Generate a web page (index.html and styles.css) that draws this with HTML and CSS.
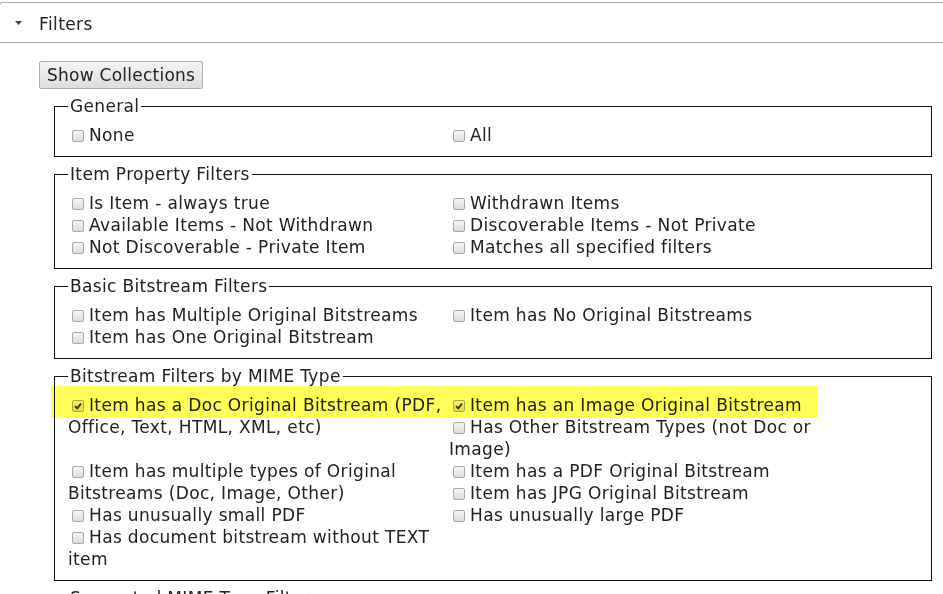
FILE: index.html
```html
<!DOCTYPE html>
<html>
<head>
<meta charset="utf-8">
<link rel="stylesheet" href="styles.css">
</head>
<body>
<div class="hdr">
  <svg class="tri" width="7" height="4" viewBox="0 0 7 4"><path d="M0 0H7L3.5 4Z" fill="#444"/></svg>
  <span class="hdr-title">Filters</span>
</div>
<div class="content">
  <button class="btn">Show Collections</button>

  <fieldset class="fs">
    <legend>General</legend>
    <div class="item"><span class="cb"></span>None</div>
    <div class="item"><span class="cb"></span>All</div>
  </fieldset>

  <fieldset class="fs">
    <legend>Item Property Filters</legend>
    <div class="item"><span class="cb"></span>Is Item - always true</div>
    <div class="item"><span class="cb"></span>Withdrawn Items</div>
    <div class="item"><span class="cb"></span>Available Items - Not Withdrawn</div>
    <div class="item"><span class="cb"></span>Discoverable Items - Not Private</div>
    <div class="item"><span class="cb"></span>Not Discoverable - Private Item</div>
    <div class="item"><span class="cb"></span>Matches all specified filters</div>
  </fieldset>

  <fieldset class="fs">
    <legend>Basic Bitstream Filters</legend>
    <div class="item"><span class="cb"></span>Item has Multiple Original Bitstreams</div>
    <div class="item"><span class="cb"></span>Item has No Original Bitstreams</div>
    <div class="item"><span class="cb"></span>Item has One Original Bitstream</div>
  </fieldset>

  <fieldset class="fs">
    <legend>Bitstream Filters by MIME Type</legend>
    <div class="item"><span class="cb on"><svg width="10" height="10" viewBox="0 0 10 10"><path d="M2 5.2L4.2 7.4L8 2.6" fill="none" stroke="#333" stroke-width="1.8"/></svg></span>Item has a Doc Original Bitstream (PDF, Office, Text, HTML, XML, etc)</div>
    <div class="item"><span class="cb on"><svg width="10" height="10" viewBox="0 0 10 10"><path d="M2 5.2L4.2 7.4L8 2.6" fill="none" stroke="#333" stroke-width="1.8"/></svg></span>Item has an Image Original Bitstream</div>
    <div class="item"><span class="cb"></span>Has Other Bitstream Types (not Doc or Image)</div>
    <div class="item"><span class="cb"></span>Item has multiple types of Original Bitstreams (Doc, Image, Other)</div>
    <div class="item"><span class="cb"></span>Item has a PDF Original Bitstream</div>
    <div class="item"><span class="cb"></span>Item has JPG Original Bitstream</div>
    <div class="item"><span class="cb"></span>Has unusually small PDF</div>
    <div class="item"><span class="cb"></span>Has unusually large PDF</div>
    <div class="item"><span class="cb"></span>Has document bitstream without TEXT item</div>
  </fieldset>

  <fieldset class="fs">
    <legend>Supported MIME Type Filters</legend>
    <div class="item"><span class="cb"></span>Item has only supported MIME Types</div>
  </fieldset>
</div>
<div class="highlight"></div>
</body>
</html>
```
FILE: styles.css
```css
html, body {
  margin: 0;
  padding: 0;
  background: #fff;
}
body {
  position: relative;
  font-family: "DejaVu Sans", Verdana, sans-serif;
  font-size: 17px;
  letter-spacing: 0.35px;
  color: #222;
  overflow: hidden;
  height: 594px;
}
.hdr {
  margin-top: 2px;
  margin-left: -1px;
  height: 39px;
  border: 1px solid #aaa;
  border-radius: 4px 0 0 0;
  border-right: none;
  display: flex;
  align-items: center;
}
.tri {
  margin-left: 15px;
  margin-top: 1px;
}
.hdr-title {
  margin-left: 17px;
  margin-top: 2px;
  font-size: 17px;
  letter-spacing: 0.4px;
}
.content {
  padding: 18px 11px 0 39px;
}
.btn {
  display: block;
  font-family: inherit;
  font-size: 17px;
  letter-spacing: 0.25px;
  color: #222;
  height: 28px;
  padding: 0 7px;
  border: 1px solid #adadad;
  border-radius: 2px;
  background: linear-gradient(#f4f4f4, #dddddd);
  margin: 0 0 6px 0;
}
.fs {
  margin: 0 0 6px 15px;
  border: 1px solid #111;
  padding: 7px 12px 10px 13px;
  display: flow-root;
}
.fs legend {
  padding: 0 2px;
  line-height: 22px;
}
.item {
  float: left;
  width: 381px;
  line-height: 22px;
}
.cb {
  display: inline-block;
  box-sizing: border-box;
  width: 12px;
  height: 12px;
  margin: 0 5px 0 4px;
  border: 1px solid #a9a9a9;
  border-radius: 2px;
  background: linear-gradient(#f6f6f6, #dcdcdc);
  vertical-align: -1px;
  position: relative;
}
.cb svg {
  position: absolute;
  left: 0;
  top: 0;
}
.highlight {
  position: absolute;
  left: 51px;
  top: 386px;
  width: 767px;
  height: 32px;
  background: #ffff58;
  mix-blend-mode: multiply;
}
```
